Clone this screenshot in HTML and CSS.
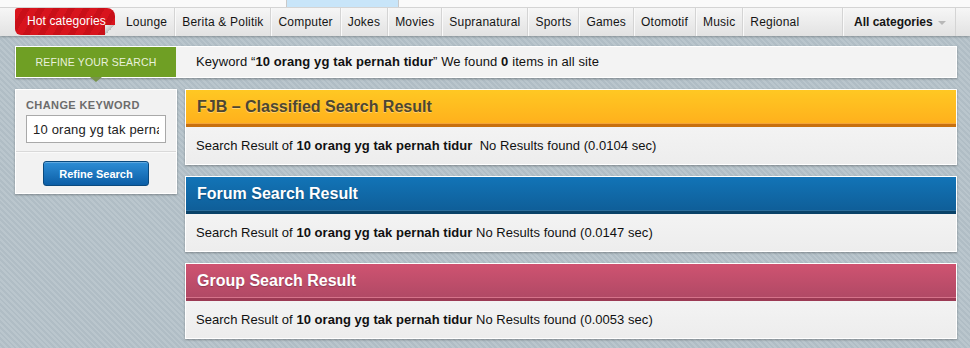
FILE: index.html
```html
<!DOCTYPE html>
<html lang="en">
<head>
  <meta charset="UTF-8">
  <title>Search Result</title>
  <link rel="stylesheet" href="styles.css">
</head>
<body>

  <!-- top strip -->
  <div class="topstrip">
    <div class="topstrip-box"></div>
  </div>

  <!-- category nav -->
  <div class="navbar">
    <a class="hot-tab">Hot categories</a>
    <ul class="nav-list">
      <li>Lounge</li>
      <li>Berita &amp; Politik</li>
      <li>Computer</li>
      <li>Jokes</li>
      <li>Movies</li>
      <li>Supranatural</li>
      <li>Sports</li>
      <li>Games</li>
      <li>Otomotif</li>
      <li>Music</li>
      <li class="last">Regional</li>
    </ul>
    <div class="all-cats">All categories <span class="caret"></span></div>
  </div>

  <div class="wrap">

    <!-- refine bar -->
    <div class="refine-bar">
      <div class="refine-label">Refine your search</div>
      <div class="refine-info">Keyword &ldquo;<b>10 orang yg tak pernah tidur</b>&rdquo; We found <b>0</b> items in all site</div>
    </div>

    <div class="content">
      <!-- sidebar -->
      <div class="sidebar">
        <div class="side-top">
          <div class="side-title">Change keyword</div>
          <input class="kw-input" type="text" value="10 orang yg tak pernah tidur">
        </div>
        <div class="side-bottom">
          <button class="btn-refine" type="button">Refine Search</button>
        </div>
      </div>

      <!-- results -->
      <div class="results">
        <div class="panel panel-fjb">
          <div class="panel-head">FJB &ndash; Classified Search Result</div>
          <div class="panel-body">Search Result of <b>10 orang yg tak pernah tidur</b>&nbsp; No Results found (0.0104 sec)</div>
        </div>

        <div class="panel panel-forum">
          <div class="panel-head">Forum Search Result</div>
          <div class="panel-body">Search Result of <b>10 orang yg tak pernah tidur</b> No Results found (0.0147 sec)</div>
        </div>

        <div class="panel panel-group">
          <div class="panel-head">Group Search Result</div>
          <div class="panel-body">Search Result of <b>10 orang yg tak pernah tidur</b> No Results found (0.0053 sec)</div>
        </div>
      </div>
    </div>

  </div>

</body>
</html>
```

FILE: styles.css
```css
* {
  box-sizing: border-box;
}

body {
  margin: 0;
  font-family: "Liberation Sans", Arial, sans-serif;
  color: #222;
  height: 348px;
  overflow: hidden;
  background: repeating-linear-gradient(45deg, #bac6cd 0, #bac6cd 2px, #b0bdc5 2px, #b0bdc5 4px);
}

/* top strip */
.topstrip {
  height: 8px;
  background: #fafafa;
  border-bottom: 1px solid #d8d8d8;
  padding-left: 286px;
}

.topstrip-box {
  width: 113px;
  height: 7px;
  background: #c8e5f9;
  border-left: 1px solid #c9c9c9;
  border-right: 1px solid #c9c9c9;
}

/* nav */
.navbar {
  display: flex;
  align-items: stretch;
  height: 28px;
  padding-left: 15px;
  background: linear-gradient(#f6f6f6, #e2e2e2);
  box-shadow: 0 1px 2px rgba(0,0,0,0.25);
  font-size: 12px;
  color: #151515;
}

.hot-tab {
  position: relative;
  width: 100px;
  height: 27px;
  line-height: 27px;
  padding-left: 12px;
  color: #fff;
  letter-spacing: 0.1px;
  border-radius: 3px 8px 0 6px;
  background: repeating-linear-gradient(120deg, #d8141d 0, #d8141d 7px, #c90f18 7px, #c90f18 13px);
}

.hot-tab::after {
  content: "";
  position: absolute;
  right: 0;
  bottom: 0;
  width: 10px;
  height: 10px;
  background: linear-gradient(315deg, #e6e6e6 50%, #bdbdbd 50%, #f2f2f2 100%);
}

.nav-list {
  display: flex;
  list-style: none;
  margin: 0 0 0 4px;
  padding: 0;
}

.nav-list li {
  padding: 0 7px;
  line-height: 28px;
  letter-spacing: 0.2px;
  border-right: 1px solid #d4d4d4;
  box-shadow: 1px 0 0 #fafafa;
  white-space: nowrap;
}

.nav-list li.last {
  border-right: none;
  box-shadow: none;
}

.all-cats {
  margin-left: auto;
  margin-right: 14px;
  width: 114px;
  padding-left: 11px;
  line-height: 28px;
  font-weight: bold;
  border-left: 1px solid #d4d4d4;
  border-right: 1px solid #d4d4d4;
  box-shadow: inset 1px 0 0 #fafafa;
}

.caret {
  display: inline-block;
  width: 0;
  height: 0;
  margin-left: 2px;
  vertical-align: middle;
  border-left: 4px solid transparent;
  border-right: 4px solid transparent;
  border-top: 4px solid #b8b8b8;
}

/* page */
.wrap {
  width: 942px;
  margin: 10px 0 0 15px;
}

.refine-bar {
  display: flex;
  height: 32px;
  background: #f3f3f3;
  border: 1px solid #fff;
  box-shadow: 0 1px 2px rgba(0,0,0,0.3);
}

.refine-label {
  position: relative;
  width: 160px;
  background: #6f9f24;
  color: #e9f1dc;
  text-transform: uppercase;
  font-size: 10.5px;
  letter-spacing: 0.15px;
  text-align: center;
  line-height: 30px;
}

.refine-label::after {
  content: "";
  position: absolute;
  left: 74px;
  bottom: -5px;
  border-left: 6px solid transparent;
  border-right: 6px solid transparent;
  border-top: 5px solid #77934a;
}

.refine-info {
  padding-left: 20px;
  font-size: 13px;
  letter-spacing: 0.1px;
  line-height: 30px;
  color: #111;
}

.content {
  display: flex;
  gap: 8px;
  margin-top: 11px;
}

/* sidebar */
.sidebar {
  width: 162px;
  height: 105px;
  background: #f2f2f2;
  border: 1px solid #fff;
  box-shadow: 0 1px 2px rgba(0,0,0,0.3);
}

.side-top {
  padding: 9px 10px 8px;
  border-bottom: 1px solid #d9d9d9;
}

.side-title {
  font-size: 11px;
  font-weight: bold;
  letter-spacing: 0.4px;
  color: #6c6c6c;
  text-transform: uppercase;
  margin-bottom: 4px;
}

.kw-input {
  width: 140px;
  height: 28px;
  padding: 0 6px;
  border: 1px solid #a9a9a9;
  background: #fff;
  font-family: "Liberation Sans", Arial, sans-serif;
  font-size: 13px;
  letter-spacing: 0.2px;
  color: #222;
}

.side-bottom {
  border-top: 1px solid #fafafa;
  padding-top: 8px;
  text-align: center;
}

.btn-refine {
  width: 106px;
  height: 25px;
  border: 1px solid #0b4a7e;
  border-radius: 3px;
  background: linear-gradient(#2e8ed6, #0c5ea6);
  color: #fff;
  font-family: "Liberation Sans", Arial, sans-serif;
  font-size: 11px;
  font-weight: bold;
  box-shadow: inset 0 1px 0 rgba(255,255,255,0.25);
}

/* result panels */
.results {
  flex: 1;
}

.panel {
  border: 1px solid #fff;
  background: #efefef;
  box-shadow: 0 1px 2px rgba(0,0,0,0.3);
  margin-bottom: 11px;
}

.panel-head {
  height: 37px;
  line-height: 34px;
  padding-left: 11px;
  font-size: 16px;
  font-weight: bold;
  border-bottom: 3px solid;
}

.panel-body {
  height: 37px;
  line-height: 37px;
  padding-left: 10px;
  font-size: 13px;
  letter-spacing: 0.04px;
  color: #111;
  background: linear-gradient(#f3f3f3, #ededed);
}

.panel-fjb .panel-head {
  color: #4d4632;
  text-shadow: 0 1px 0 rgba(255,255,255,0.35);
  background: linear-gradient(#ffc823, #ffb01c);
  border-bottom-color: #c8700e;
  box-shadow: inset 0 -1px 0 #f2a43a;
}

.panel-forum .panel-head {
  color: #fff;
  text-shadow: 0 1px 1px rgba(0,0,0,0.3);
  background: linear-gradient(#1274b7, #0f5e98);
  border-bottom-color: #0a4268;
  box-shadow: inset 0 -1px 0 #2b6d9c;
}

.panel-group .panel-head {
  color: #fff;
  text-shadow: 0 1px 1px rgba(0,0,0,0.25);
  background: linear-gradient(#cf5371, #b04965);
  border-bottom-color: #9c3a54;
  box-shadow: inset 0 -1px 0 #d6738b;
}
```
